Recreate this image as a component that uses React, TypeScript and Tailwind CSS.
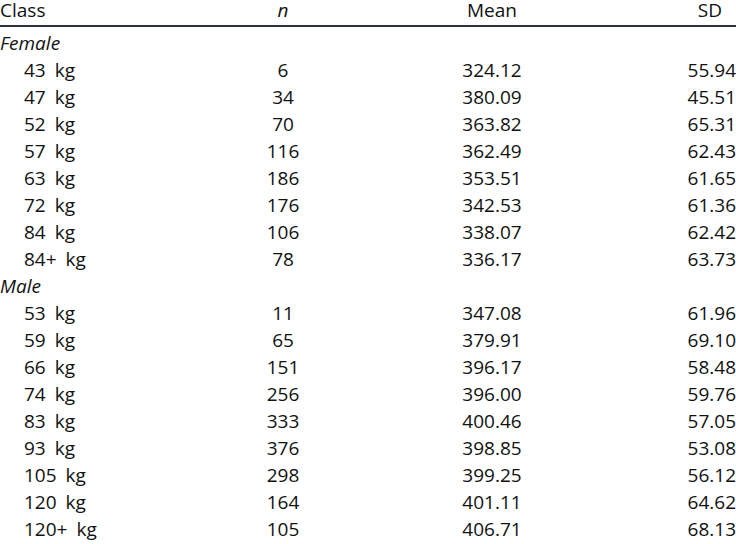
const female = [
  ['43', '6', '324.12', '55.94'],
  ['47', '34', '380.09', '45.51'],
  ['52', '70', '363.82', '65.31'],
  ['57', '116', '362.49', '62.43'],
  ['63', '186', '353.51', '61.65'],
  ['72', '176', '342.53', '61.36'],
  ['84', '106', '338.07', '62.42'],
  ['84+', '78', '336.17', '63.73'],
];

const male = [
  ['53', '11', '347.08', '61.96'],
  ['59', '65', '379.91', '69.10'],
  ['66', '151', '396.17', '58.48'],
  ['74', '256', '396.00', '59.76'],
  ['83', '333', '400.46', '57.05'],
  ['93', '376', '398.85', '53.08'],
  ['105', '298', '399.25', '56.12'],
  ['120', '164', '401.11', '64.62'],
  ['120+', '105', '406.71', '68.13'],
];

function Row({ row }: { row: string[] }) {
  const [cls, n, mean, sd] = row;
  return (
    <tr className="leading-[27px]">
      <td className="pl-[24px] whitespace-nowrap">
        {cls}
        <span className="ml-[9px]">kg</span>
      </td>
      <td className="text-center">{n}</td>
      <td className="text-center">{mean}</td>
      <td className="text-right">{sd}</td>
    </tr>
  );
}

function Group({ label }: { label: string }) {
  return (
    <tr className="leading-[27px]">
      <td colSpan={4} className="italic">{label}</td>
    </tr>
  );
}

export default function App() {
  return (
    <div className="w-[736px] h-[544px] bg-white overflow-hidden text-[#111111] text-[19px] font-['Open_Sans',sans-serif]">
      <table className="w-full table-fixed border-collapse">
        <colgroup>
          <col className="w-[183px]" />
          <col className="w-[200px]" />
          <col className="w-[218px]" />
          <col />
        </colgroup>
        <thead>
          <tr className="leading-[21px] border-b-2 border-[#2c3040]">
            <th className="text-left font-normal pb-[4px]">Class</th>
            <th className="text-center font-normal italic pb-[4px]">n</th>
            <th className="text-center font-normal pb-[4px]">Mean</th>
            <th className="text-right font-normal pb-[4px] pr-[14px]">SD</th>
          </tr>
        </thead>
        <tbody>
          <tr className="h-[4px]"><td colSpan={4} /></tr>
          <Group label="Female" />
          {female.map((r) => <Row key={'f' + r[0]} row={r} />)}
          <Group label="Male" />
          {male.map((r) => <Row key={'m' + r[0]} row={r} />)}
        </tbody>
      </table>
    </div>
  );
}
